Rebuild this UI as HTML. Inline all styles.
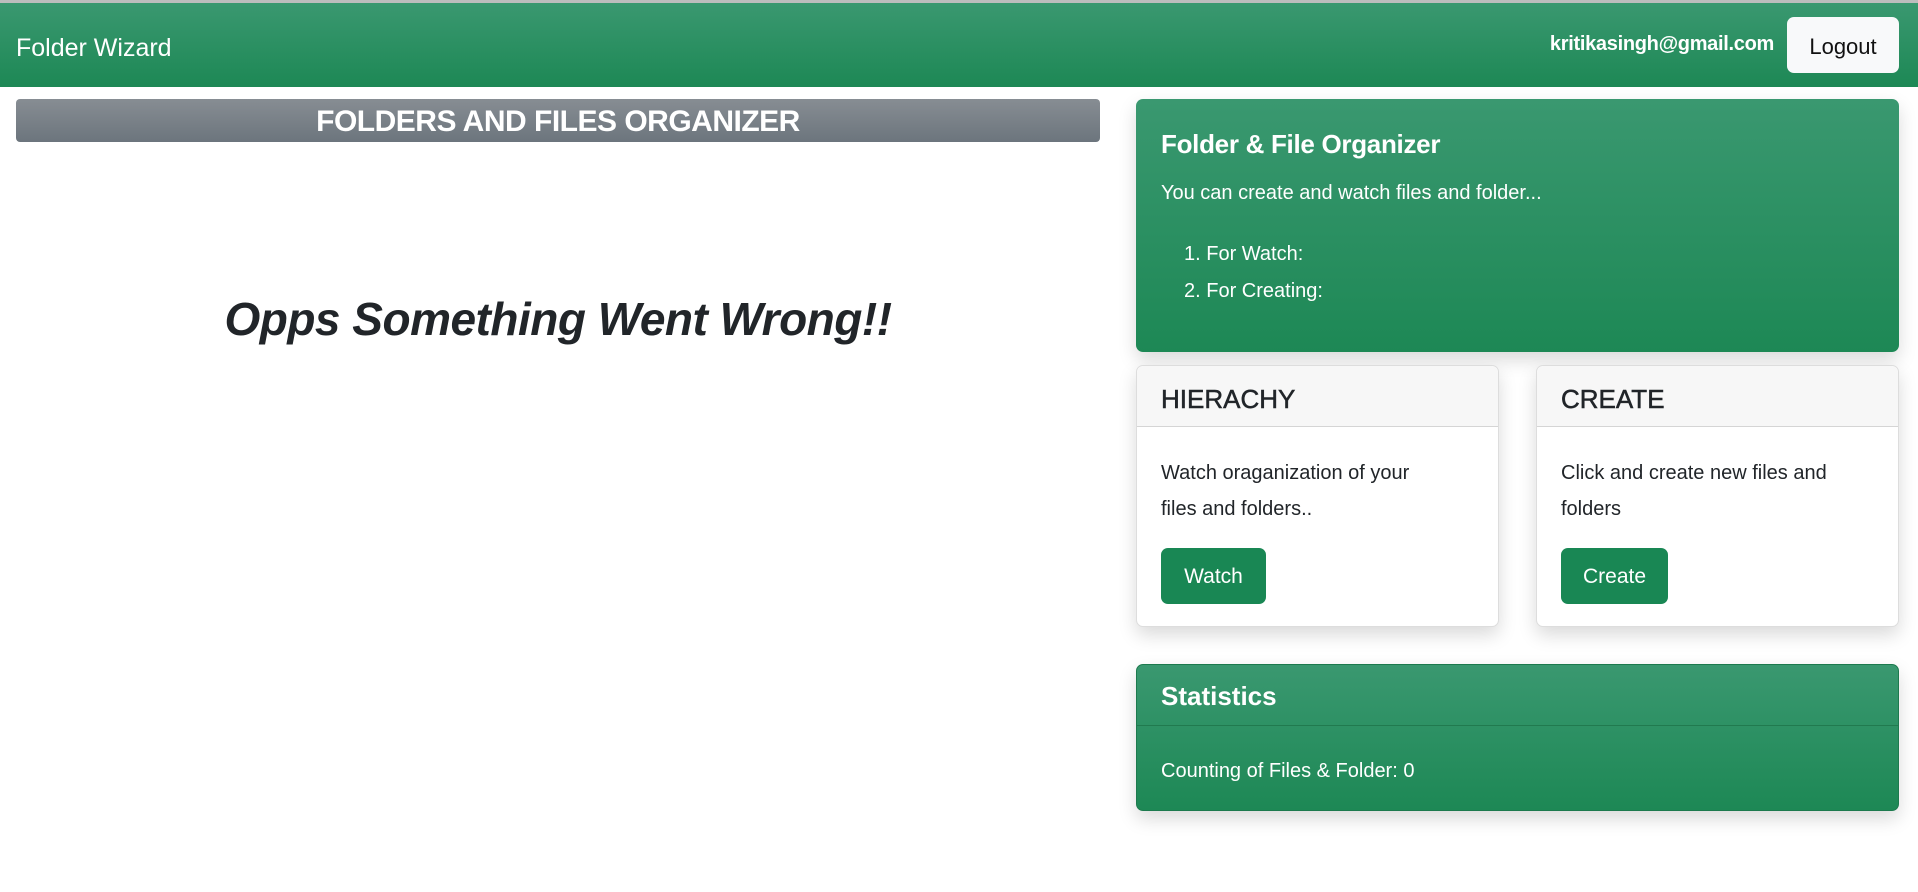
<!DOCTYPE html>
<html><head><meta charset="utf-8"><style>
*{box-sizing:border-box;margin:0;padding:0}
body{width:1918px;height:892px;background:#fff;font-family:"Liberation Sans",sans-serif;position:relative;overflow:hidden;color:#212529}
.abs{position:absolute}
.green{background:linear-gradient(#3a9870,#1d8855)}
.card{border-radius:7px;box-shadow:0 8px 18px rgba(0,0,0,.15)}
</style></head><body>
<div class="abs" style="left:0;top:0;width:1918px;height:3px;background:#bdbdbd"></div>
<div class="abs green" style="left:0;top:3px;width:1918px;height:84px"></div>
<div class="abs" style="left:16px;top:34px;color:#fff;font-size:25px">Folder Wizard</div>
<div class="abs" style="left:1500px;top:33px;width:274px;text-align:right;color:#fff;font-size:20px;font-weight:bold;letter-spacing:-0.3px">kritikasingh@gmail.com</div>
<div class="abs" style="left:1787px;top:17px;width:112px;height:56px;background:#f8f9fa;border-radius:7px;font-size:22px;line-height:60px;text-align:center;color:#111">Logout</div>

<div class="abs" style="left:16px;top:99px;width:1084px;height:43px;border-radius:4px;background:linear-gradient(#878d93,#6c757d);color:#fff;font-weight:bold;font-size:30px;line-height:46px;text-align:center;letter-spacing:-0.5px">FOLDERS AND FILES ORGANIZER</div>
<div class="abs" style="left:16px;top:292px;width:1084px;text-align:center;font-size:46px;font-weight:bold;font-style:italic;color:#212529;letter-spacing:-0.5px">Opps Something Went Wrong!!</div>

<div class="abs green card" style="left:1136px;top:99px;width:763px;height:253px;color:#fff">
  <div class="abs" style="left:25px;top:30px;font-size:26px;font-weight:bold;letter-spacing:-0.3px">Folder &amp; File Organizer</div>
  <div class="abs" style="left:25px;top:83px;font-size:20px">You can create and watch files and folder...</div>
  <div class="abs" style="left:48px;top:137px;font-size:20px;line-height:37px">1. For Watch:<br>2. For Creating:</div>
</div>

<div class="abs card" style="left:1136px;top:365px;width:363px;height:262px;border:1px solid #ddd;background:#fff">
  <div style="height:61px;background:#f7f7f7;border-bottom:1px solid #d5d5d5;border-radius:7px 7px 0 0;padding:18px 0 0 24px;font-size:26px;color:#212529;-webkit-text-stroke:0.5px #212529">HIERACHY</div>
  <div class="abs" style="left:24px;top:89px;font-size:20px;line-height:36px;width:265px">Watch oraganization of your files and folders..</div>
  <div class="abs" style="left:24px;top:182px;width:105px;height:56px;background:#198754;border-radius:7px;color:#fff;font-size:21px;line-height:58px;text-align:center">Watch</div>
</div>
<div class="abs card" style="left:1536px;top:365px;width:363px;height:262px;border:1px solid #ddd;background:#fff">
  <div style="height:61px;background:#f7f7f7;border-bottom:1px solid #d5d5d5;border-radius:7px 7px 0 0;padding:18px 0 0 24px;font-size:26px;color:#212529;-webkit-text-stroke:0.5px #212529">CREATE</div>
  <div class="abs" style="left:24px;top:89px;font-size:20px;line-height:36px;width:330px">Click and create new files and folders</div>
  <div class="abs" style="left:24px;top:182px;width:107px;height:56px;background:#198754;border-radius:7px;color:#fff;font-size:21px;line-height:58px;text-align:center">Create</div>
</div>

<div class="abs green card" style="left:1136px;top:664px;width:763px;height:147px;color:#fff;border:1px solid #1d7a4e">
  <div style="height:61px;border-bottom:1px solid #217a4f;padding:16px 0 0 24px;font-size:26px;font-weight:bold">Statistics</div>
  <div class="abs" style="left:24px;top:95px;font-size:20px">Counting of Files &amp; Folder: 0</div>
</div>
</body></html>
